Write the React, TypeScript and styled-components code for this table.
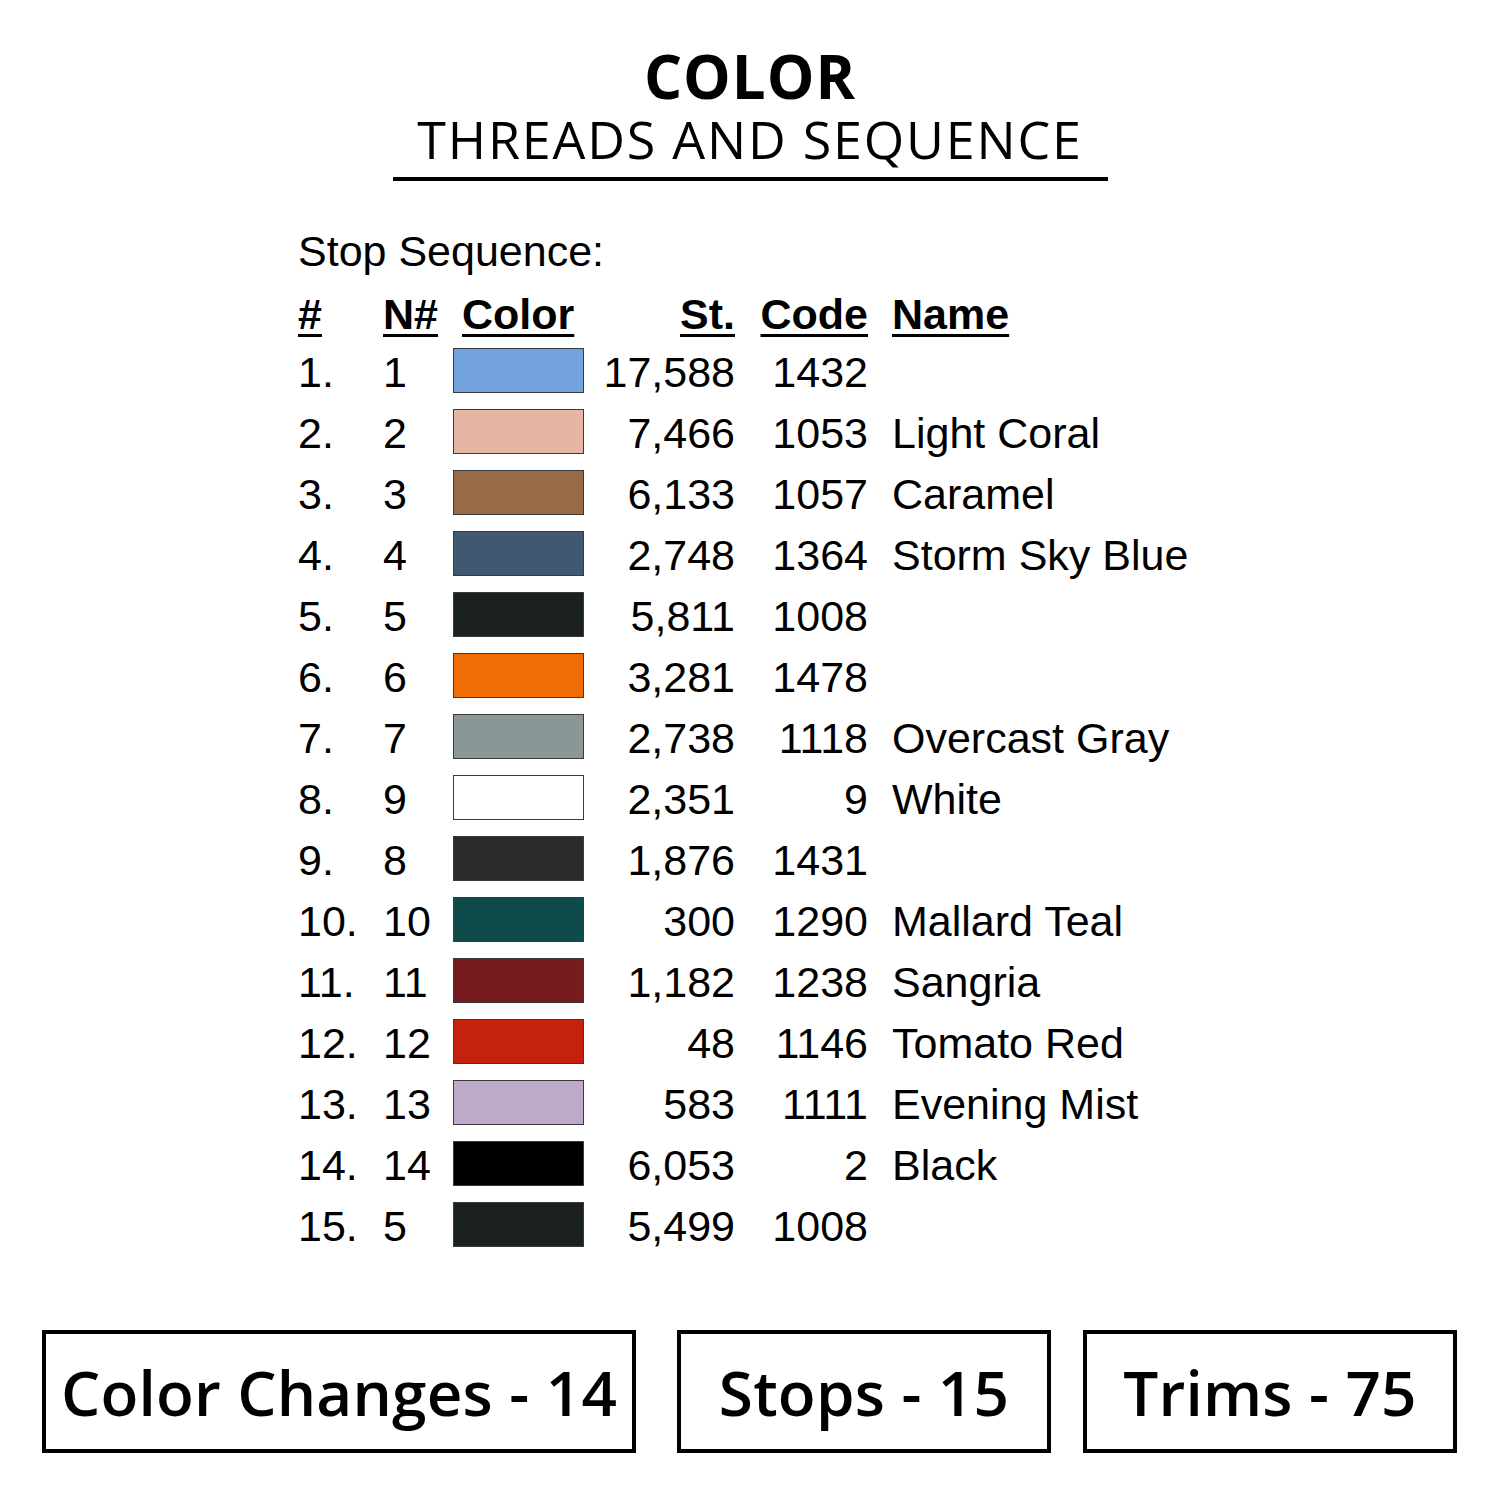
import styled, { createGlobalStyle } from "styled-components";

const Global = createGlobalStyle`
  html, body {
    margin: 0;
    padding: 0;
    background: #fff;
  }
  body {
    font-family: "Liberation Sans", Arial, sans-serif;
    color: #000;
  }
`;

const Page = styled.div`
  width: 1500px;
  height: 1500px;
  display: flex;
  flex-direction: column;
  background: #fff;
`;

const Heading = styled.header`
  display: flex;
  flex-direction: column;
  align-items: center;
  padding-top: 41px;
`;

const Title = styled.h1`
  margin: 0;
  font-family: "Open Sans", sans-serif;
  font-weight: 700;
  font-size: 60px;
  line-height: 70px;
  letter-spacing: 1px;
`;

const Subtitle = styled.h2`
  margin: 0;
  font-family: "Open Sans", sans-serif;
  font-weight: 400;
  font-size: 52px;
  line-height: 56px;
  letter-spacing: 1.8px;
  width: 715px;
  text-align: center;
  padding-bottom: 10px;
  border-bottom: 4px solid #000;
`;

const Section = styled.section`
  padding-left: 298px;
  margin-top: 45px;
`;

const Caption = styled.div`
  font-size: 43px;
  line-height: 50px;
  margin-bottom: 11px;
`;

const Table = styled.div`
  display: grid;
  grid-template-columns: 85px 70px 131px 151px 133px auto;
  grid-auto-rows: 61px;
  grid-template-rows: 55px;
  align-items: center;
  font-size: 43px;
`;

const Head = styled.div<{ $right?: boolean; $pad?: number }>`
  font-weight: 700;
  text-decoration: underline;
  text-decoration-thickness: 3px;
  text-underline-offset: 5px;
  text-align: ${(p) => (p.$right ? "right" : "left")};
  padding-left: ${(p) => p.$pad ?? 0}px;
  white-space: nowrap;
`;

const Cell = styled.div<{ $right?: boolean; $pad?: number }>`
  text-align: ${(p) => (p.$right ? "right" : "left")};
  padding-left: ${(p) => p.$pad ?? 0}px;
  white-space: nowrap;
  line-height: 61px;
`;

const Swatch = styled.div<{ $color: string }>`
  width: 131px;
  height: 45px;
  box-sizing: border-box;
  background: ${(p) => p.$color};
  border: 1.5px solid #3a3a3a;
  margin-top: -4px;
`;

const Stats = styled.div`
  display: flex;
  padding-left: 42px;
  margin-top: 73px;
`;

const StatBox = styled.div<{ $width: number; $offset: number }>`
  width: ${(p) => p.$width}px;
  height: 123px;
  margin-left: ${(p) => p.$offset}px;
  box-sizing: border-box;
  border: 4px solid #000;
  display: flex;
  align-items: center;
  justify-content: center;
  font-family: "Open Sans", sans-serif;
  font-weight: 600;
  font-size: 62px;
  letter-spacing: 0.2px;
`;

const rows = [
  { n: "1", color: "#72a3de", st: "17,588", code: "1432", name: "" },
  { n: "2", color: "#e5b6a3", st: "7,466", code: "1053", name: "Light Coral" },
  { n: "3", color: "#986b47", st: "6,133", code: "1057", name: "Caramel" },
  { n: "4", color: "#415873", st: "2,748", code: "1364", name: "Storm Sky Blue" },
  { n: "5", color: "#1b2021", st: "5,811", code: "1008", name: "" },
  { n: "6", color: "#f06c05", st: "3,281", code: "1478", name: "" },
  { n: "7", color: "#8b9697", st: "2,738", code: "1118", name: "Overcast Gray" },
  { n: "9", color: "#ffffff", st: "2,351", code: "9", name: "White" },
  { n: "8", color: "#2a2b2b", st: "1,876", code: "1431", name: "" },
  { n: "10", color: "#0e4b4a", st: "300", code: "1290", name: "Mallard Teal" },
  { n: "11", color: "#761b1e", st: "1,182", code: "1238", name: "Sangria" },
  { n: "12", color: "#c4220d", st: "48", code: "1146", name: "Tomato Red" },
  { n: "13", color: "#bfaac9", st: "583", code: "1111", name: "Evening Mist" },
  { n: "14", color: "#000000", st: "6,053", code: "2", name: "Black" },
  { n: "5", color: "#1b2021", st: "5,499", code: "1008", name: "" },
];

const stats = [
  { label: "Color Changes - 14", width: 594, offset: 0 },
  { label: "Stops - 15", width: 374, offset: 41 },
  { label: "Trims - 75", width: 374, offset: 32 },
];

export default function App() {
  return (
    <Page>
      <Global />
      <Heading>
        <Title>COLOR</Title>
        <Subtitle>THREADS AND SEQUENCE</Subtitle>
      </Heading>
      <Section>
        <Caption>Stop Sequence:</Caption>
        <Table>
          <Head>#</Head>
          <Head>N#</Head>
          <Head $pad={9}>Color</Head>
          <Head $right>St.</Head>
          <Head $right>Code</Head>
          <Head $pad={24}>Name</Head>
          {rows.map((r, i) => (
            <>
              <Cell key={`a${i}`}>{i + 1}.</Cell>
              <Cell key={`b${i}`}>{r.n}</Cell>
              <Swatch key={`c${i}`} $color={r.color} />
              <Cell key={`d${i}`} $right>
                {r.st}
              </Cell>
              <Cell key={`e${i}`} $right>
                {r.code}
              </Cell>
              <Cell key={`f${i}`} $pad={24}>
                {r.name}
              </Cell>
            </>
          ))}
        </Table>
      </Section>
      <Stats>
        {stats.map((s) => (
          <StatBox key={s.label} $width={s.width} $offset={s.offset}>
            {s.label}
          </StatBox>
        ))}
      </Stats>
    </Page>
  );
}
